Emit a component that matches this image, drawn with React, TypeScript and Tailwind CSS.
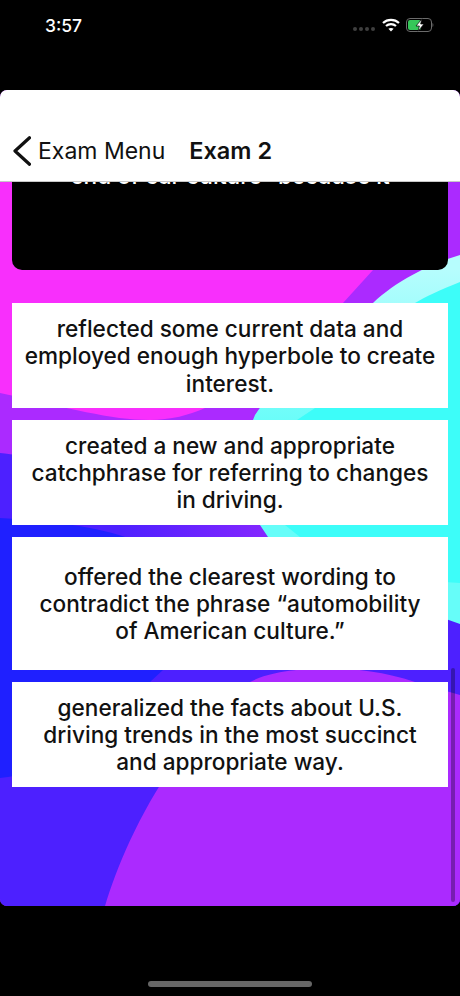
const answers = [
  { text: ["reflected some current data and", "employed enough hyperbole to create", "interest."], pad: "pt-[12px] pb-[11px]" },
  { text: ["created a new and appropriate", "catchphrase for referring to changes", "in driving."], pad: "pt-[12px] pb-[11px]" },
  { text: ["offered the clearest wording to", "contradict the phrase “automobility", "of American culture.”"], pad: "pt-[26px] pb-[25px]" },
  { text: ["generalized the facts about U.S.", "driving trends in the most succinct", "and appropriate way."], pad: "pt-[12px] pb-[11px]" },
];

function Wifi() {
  return (
    <svg width="18" height="14" viewBox="0 0 18 14" fill="none" stroke="white" strokeWidth="2.2">
      <path d="M1 5 C5.5 0.8 12.5 0.8 17 5" />
      <path d="M4 8 C6.8 5.5 11.2 5.5 14 8" />
      <path d="M9 13.6 L6.4 10.8 C7.9 9.6 10.1 9.6 11.6 10.8 Z" fill="white" stroke="none" />
    </svg>
  );
}

function Battery() {
  return (
    <svg width="28" height="14" viewBox="0 0 28 14" fill="none">
      <rect x="0.5" y="0.5" width="25" height="13" rx="3.5" stroke="#6b6b6b" />
      <rect x="2" y="2" width="13" height="10" rx="2" fill="#35c759" />
      <path d="M26.5 5 C27.7 5.4 27.7 8.6 26.5 9 Z" fill="#6b6b6b" />
      <path d="M16 0.8 L10 8 L13.4 8 L12 13.2 L18 6 L14.6 6 Z" fill="white" stroke="black" strokeWidth="0.7" />
    </svg>
  );
}

function Backdrop() {
  return (
    <svg className="absolute inset-0 h-full w-full" viewBox="0 90 460 816" preserveAspectRatio="none">
      <defs>
        <linearGradient id="gapTint" gradientUnits="userSpaceOnUse" x1="120" y1="0" x2="265" y2="0">
          <stop offset="0" stopColor="#8427ff" stopOpacity="0" />
          <stop offset="1" stopColor="#8427ff" />
        </linearGradient>
        <linearGradient id="lightBand" gradientUnits="userSpaceOnUse" x1="0" y1="270" x2="0" y2="430">
          <stop offset="0" stopColor="#b6fdfd" />
          <stop offset="1" stopColor="#66fdf9" />
        </linearGradient>
      </defs>
      <rect x="0" y="90" width="460" height="816" fill="#ab2aff" />
      <path d="M0 182 L430 182 L373 270 L343 303 C290 360 240 395 205 408 C190 415 170 420 150 420 C110 420 70 408 0 393 Z" fill="#f82ffc" />
      <path d="M0 453 C60 460 200 480 280 530 L460 620 L460 906 L0 906 Z" fill="#4d20ff" />
      <rect x="120" y="500" width="160" height="45" fill="url(#gapTint)" />
      <path d="M0 518 C40 520 90 525 125 537 L240 600 L163 670 L150 682 C110 740 60 772 0 778 Z" fill="#1f20ff" />
      <path d="M105 906 C122 850 165 750 250 682 C275 668 350 660 415 682 L460 695 L460 906 Z" fill="#ab2aff" />
      <path d="M460 255 C427 265 395 282 373 303 C320 340 275 385 255 415 C240 450 245 500 260 525 L268 537 L350 585 L460 624 Z" fill="url(#lightBand)" />
      <path d="M460 282 C440 290 425 297 415 303 C370 335 335 375 315 408 L297 420 C275 460 270 500 285 525 L300 537 C340 565 400 580 460 583 Z" fill="#3dfdf9" />
    </svg>
  );
}

export default function App() {
  return (
    <div className="flex h-[996px] w-[460px] flex-col overflow-hidden bg-black font-['Inter',sans-serif] text-black">
      {/* status bar */}
      <div className="flex h-[90px] shrink-0 items-start justify-between pl-[45px] pr-[26px] pt-[16px] text-white">
        <span className="text-[17.5px] font-medium leading-[20px]">3:57</span>
        <div className="flex items-center gap-[6px] pt-[2px]">
          <div className="mr-[1px] mt-[8px] flex gap-[2px]">
            <span className="h-[4px] w-[4px] rounded-full bg-[#3f3f3f]" />
            <span className="h-[4px] w-[4px] rounded-full bg-[#3f3f3f]" />
            <span className="h-[4px] w-[4px] rounded-full bg-[#3f3f3f]" />
            <span className="h-[4px] w-[4px] rounded-full bg-[#3f3f3f]" />
          </div>
          <Wifi />
          <Battery />
        </div>
      </div>

      <div className="relative flex h-[816px] shrink-0 flex-col overflow-hidden rounded-[7px]">
        <Backdrop />

        {/* nav */}
        <div className="relative z-10 flex h-[92px] shrink-0 items-end gap-[24px] border-b border-[#c8c8c8] bg-white pb-[15px] pl-[13px]">
          <div className="flex items-center gap-[7px]">
            <svg width="18" height="30" viewBox="0 0 18 30" fill="none" stroke="#111" strokeWidth="3.2" strokeLinecap="round" strokeLinejoin="round">
              <path d="M16.5 1.8 L2 15 L16.5 28.2" />
            </svg>
            <span className="text-[23px] leading-[30px] text-[#111]">Exam Menu</span>
          </div>
          <span className="text-[23.5px] font-semibold leading-[30px] text-[#111]">Exam 2</span>
        </div>

        {/* question card, scrolled up under the nav */}
        <div className="relative mx-[12px] h-[88px] shrink-0 overflow-hidden rounded-b-[10px] bg-black text-center">
          <p className="-mt-[20px] text-[22.6px] font-medium leading-[27px] text-white">end of car culture” because it</p>
        </div>

        <div className="relative mx-[12px] mt-[33px] flex flex-col gap-[12px]">
          {answers.map((a) => (
            <div key={a.text[0]} className={`bg-white text-center text-[22.6px] font-medium leading-[27.3px] text-[#111] ${a.pad}`}>
              {a.text.map((line) => (
                <div key={line} className="whitespace-nowrap">{line}</div>
              ))}
            </div>
          ))}
        </div>

        {/* scroll indicator */}
        <div className="absolute bottom-[4px] right-[5px] h-[234px] w-[4px] rounded-full bg-black/30" />
      </div>

      <div className="flex flex-1 items-end justify-center pb-[9px]">
        <div className="h-[6px] w-[164px] rounded-full bg-[#666]" />
      </div>
    </div>
  );
}
